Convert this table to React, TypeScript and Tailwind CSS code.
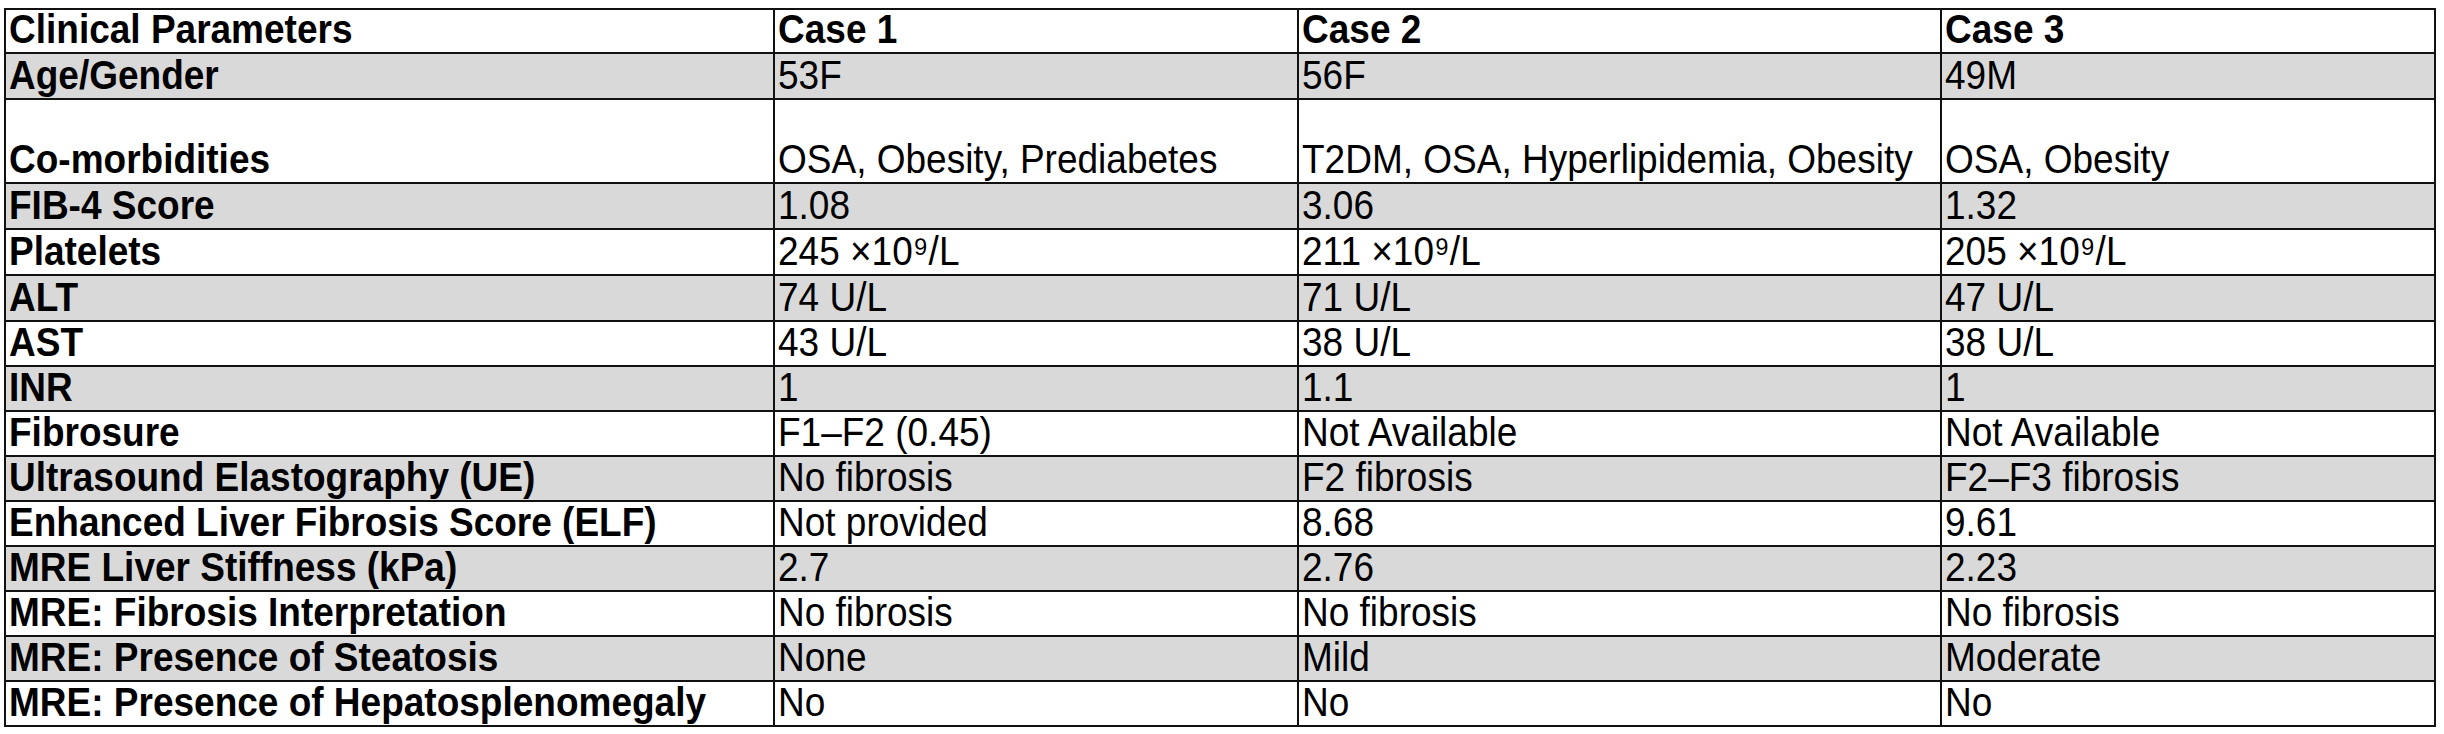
const rows: { label: string; values: string[]; gray: boolean; h: string }[] = [
  { label: "Age/Gender", values: ["53F", "56F", "49M"], gray: true, h: "h-[44px]" },
  {
    label: "Co-morbidities",
    values: ["OSA, Obesity, Prediabetes", "T2DM, OSA, Hyperlipidemia, Obesity", "OSA, Obesity"],
    gray: false,
    h: "h-[82px]",
  },
  { label: "FIB-4 Score", values: ["1.08", "3.06", "1.32"], gray: true, h: "h-[44px]" },
  { label: "Platelets", values: ["245 ×10⁹/L", "211 ×10⁹/L", "205 ×10⁹/L"], gray: false, h: "h-[44px]" },
  { label: "ALT", values: ["74 U/L", "71 U/L", "47 U/L"], gray: true, h: "h-[44px]" },
  { label: "AST", values: ["43 U/L", "38 U/L", "38 U/L"], gray: false, h: "h-[43px]" },
  { label: "INR", values: ["1", "1.1", "1"], gray: true, h: "h-[43px]" },
  { label: "Fibrosure", values: ["F1–F2 (0.45)", "Not Available", "Not Available"], gray: false, h: "h-[43px]" },
  { label: "Ultrasound Elastography (UE)", values: ["No fibrosis", "F2 fibrosis", "F2–F3 fibrosis"], gray: true, h: "h-[43px]" },
  { label: "Enhanced Liver Fibrosis Score (ELF)", values: ["Not provided", "8.68", "9.61"], gray: false, h: "h-[43px]" },
  { label: "MRE Liver Stiffness (kPa)", values: ["2.7", "2.76", "2.23"], gray: true, h: "h-[43px]" },
  { label: "MRE: Fibrosis Interpretation", values: ["No fibrosis", "No fibrosis", "No fibrosis"], gray: false, h: "h-[43px]" },
  { label: "MRE: Presence of Steatosis", values: ["None", "Mild", "Moderate"], gray: true, h: "h-[43px]" },
  { label: "MRE: Presence of Hepatosplenomegaly", values: ["No", "No", "No"], gray: false, h: "h-[43px]" },
];

function Cell({ text, bold, gray, h }: { text: string; bold?: boolean; gray?: boolean; h: string }) {
  return (
    <div
      className={`${h} flex items-end whitespace-nowrap pl-[3px] text-[37px] leading-[40px] text-black ${
        bold ? "font-bold" : "font-normal"
      } ${gray ? "bg-[#d9d9d9]" : "bg-white"}`}
    >
      <span className="inline-block origin-bottom-left scale-y-[1.1]">{text}</span>
    </div>
  );
}

export default function App() {
  return (
    <div className="min-h-screen bg-white pt-[8px] pl-[4px]" style={{ fontFamily: '"Liberation Sans", Arial, sans-serif' }}>
      <div className="grid w-[2432px] grid-cols-[767px_522px_641px_492px] gap-[2px] bg-[#111] p-[2px]">
        <Cell text="Clinical Parameters" bold h="h-[42px]" />
        <Cell text="Case 1" bold h="h-[42px]" />
        <Cell text="Case 2" bold h="h-[42px]" />
        <Cell text="Case 3" bold h="h-[42px]" />
        {rows.map((r) => (
          <div key={r.label} className="contents">
            <Cell text={r.label} bold gray={r.gray} h={r.h} />
            {r.values.map((v, i) => (
              <Cell key={i} text={v} gray={r.gray} h={r.h} />
            ))}
          </div>
        ))}
      </div>
    </div>
  );
}
